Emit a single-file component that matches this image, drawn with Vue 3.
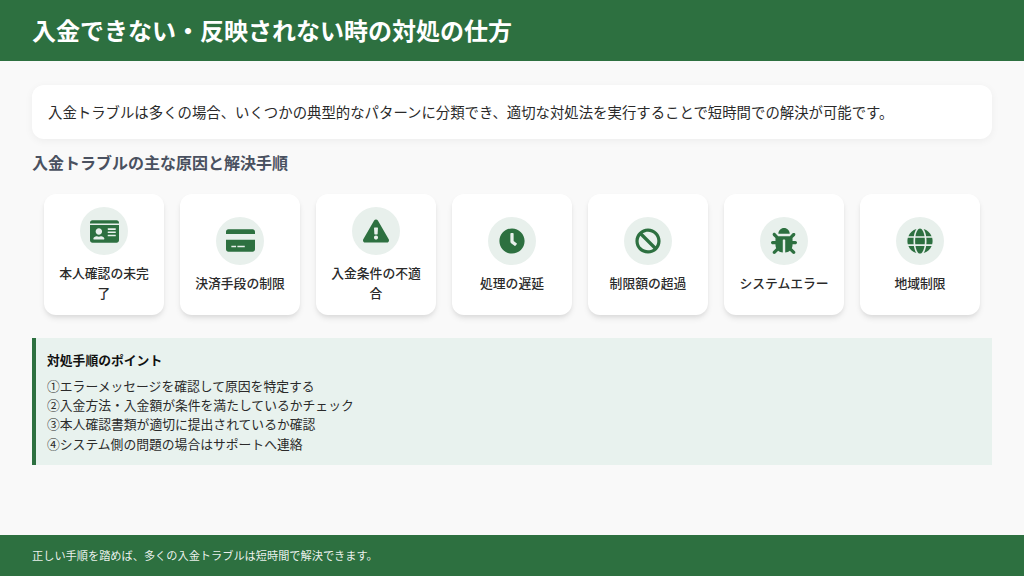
<script setup>
const cards = [
  { label: '本人確認の未完了', vb: '0 0 576 512', w: 29, d: 'M528 32H48C21.5 32 0 53.5 0 80v16h576V80c0-26.5-21.5-48-48-48zM0 128h576v304c0 26.5-21.5 48-48 48H48c-26.5 0-48-21.5-48-48zM176 192c35.3 0 64 28.7 64 64s-28.7 64-64 64-64-28.7-64-64 28.7-64 64-64zM67.1 396.2C75.5 370.5 99.6 352 128 352h8.2c12.3 5.1 25.7 8 39.8 8s27.6-2.9 39.8-8h8.2c28.4 0 52.5 18.5 60.9 44.2 3.2 9.9-5.2 19.8-15.6 19.8H82.7c-10.4 0-18.8-10-15.6-19.8zM352 200c0-4.4 3.6-8 8-8h144c4.4 0 8 3.6 8 8v16c0 4.4-3.6 8-8 8H360c-4.4 0-8-3.6-8-8v-16zm0 64c0-4.4 3.6-8 8-8h144c4.4 0 8 3.6 8 8v16c0 4.4-3.6 8-8 8H360c-4.4 0-8-3.6-8-8v-16zm0 64c0-4.4 3.6-8 8-8h144c4.4 0 8 3.6 8 8v16c0 4.4-3.6 8-8 8H360c-4.4 0-8-3.6-8-8v-16z' },
  { label: '決済手段の制限', vb: '0 0 576 512', w: 29, d: 'M48 32h480c26.5 0 48 21.5 48 48v48H0V80c0-26.5 21.5-48 48-48zM0 240h576v192c0 26.5-21.5 48-48 48H48c-26.5 0-48-21.5-48-48zM106 358h94v30h-94zM226 358h147v30H226z' },
  { label: '入金条件の不適合', vb: '0 0 576 512', w: 26, d: 'M569.517 440.013C587.975 472.007 564.806 512 527.94 512H48.054c-36.937 0-59.999-40.055-41.577-71.987L246.423 23.985c18.467-32.009 64.72-31.951 83.154 0l239.94 416.028zM288 354c-25.405 0-46 20.595-46 46s20.595 46 46 46 46-20.595 46-46-20.595-46-46-46zm-43.673-165.346l7.418 136c.347 6.364 5.609 11.346 11.982 11.346h48.546c6.373 0 11.635-4.982 11.982-11.346l7.418-136c.375-6.874-5.098-12.654-11.982-12.654h-63.383c-6.884 0-12.356 5.78-11.981 12.654z' },
  { label: '処理の遅延', vb: '0 0 512 512', w: 26, d: 'M256,8C119,8,8,119,8,256S119,504,256,504,504,393,504,256,393,8,256,8Zm92.49,313h0l-20,25a16,16,0,0,1-22.49,2.5h0l-67-49.72a40,40,0,0,1-15-31.23V112a16,16,0,0,1,16-16h32a16,16,0,0,1,16,16V256l58,42.5A16,16,0,0,1,348.49,321Z' },
  { label: '制限額の超過', vb: '0 0 512 512', w: 26, d: 'M256 8C119.034 8 8 119.033 8 256s111.034 248 248 248 248-111.034 248-248S392.967 8 256 8zm130.108 117.892c65.448 65.448 70 165.481 20.677 235.637L150.47 105.216c70.204-49.356 170.226-44.735 235.638 20.676zM125.892 386.108c-65.448-65.448-70-165.481-20.677-235.637L361.53 406.784c-70.203 49.356-170.226 44.736-235.638-20.676z' },
  { label: 'システムエラー', vb: '0 0 512 512', w: 26, d: 'M511.988 288.9c-.478 17.43-15.217 31.1-32.653 31.1H424v16c0 21.864-4.882 42.584-13.6 61.145l60.228 60.228c12.496 12.497 12.496 32.758 0 45.255-12.498 12.497-32.759 12.496-45.256 0l-54.736-54.736C345.886 467.965 314.351 480 280 480V236c0-6.627-5.373-12-12-12h-24c-6.627 0-12 5.373-12 12v244c-34.351 0-65.886-12.035-90.636-32.108l-54.736 54.736c-12.498 12.497-32.759 12.496-45.256 0-12.496-12.497-12.496-32.758 0-45.255l60.228-60.228C92.882 378.584 88 357.864 88 336v-16H32.666C15.23 320 .491 306.33.013 288.9-.484 270.816 14.028 256 32 256h56v-58.745l-46.628-46.628c-12.496-12.497-12.496-32.758 0-45.255 12.498-12.497 32.758-12.497 45.256 0L141.255 160h229.489l54.627-54.627c12.498-12.497 32.758-12.497 45.256 0 12.496 12.497 12.496 32.758 0 45.255L424 197.255V256h56c17.972 0 32.484 14.816 31.988 32.9zM257 0c-61.856 0-112 50.144-112 112h224C369 50.144 318.856 0 257 0z' },
  { label: '地域制限', vb: '0 0 496 512', w: 26, d: 'M336.5 160C322 70.7 287.8 8 248 8s-74 62.7-88.5 152h177zM152 256c0 22.2 1.2 43.5 3.3 64h185.3c2.1-20.5 3.3-41.8 3.3-64s-1.2-43.5-3.3-64H155.3c-2.1 20.5-3.3 41.8-3.3 64zm324.7-96c-28.6-67.9-86.5-120.4-158-141.6 24.4 33.8 41.2 84.7 50 141.6h108zM177.2 18.4C105.8 39.6 47.8 92.1 19.3 160h108c8.7-56.9 25.5-107.8 49.9-141.6zM487.4 192H372.7c2.1 21 3.3 42.5 3.3 64s-1.2 43-3.3 64h114.6c5.5-20.5 8.6-41.8 8.6-64s-3.1-43.5-8.5-64zM120 256c0-21.5 1.2-43 3.3-64H8.6C3.2 212.5 0 233.8 0 256s3.2 43.5 8.6 64h114.6c-2-21-3.2-42.5-3.2-64zm39.5 96c14.5 89.3 48.7 152 88.5 152s74-62.7 88.5-152h-177zm159.3 141.6c71.4-21.2 129.4-73.7 158-141.6h-108c-8.8 56.9-25.6 107.8-50 141.6zM19.3 352c28.6 67.9 86.5 120.4 158 141.6-24.4-33.8-41.2-84.7-50-141.6h-108z' },
]
const steps = [
  '①エラーメッセージを確認して原因を特定する',
  '②入金方法・入金額が条件を満たしているかチェック',
  '③本人確認書類が適切に提出されているか確認',
  '④システム側の問題の場合はサポートへ連絡',
]
</script>

<template>
  <div class="page">
    <header class="top"><h1>入金できない・反映されない時の対処の仕方</h1></header>
    <main class="body">
      <p class="intro">入金トラブルは多くの場合、いくつかの典型的なパターンに分類でき、適切な対処法を実行することで短時間での解決が可能です。</p>
      <h2>入金トラブルの主な原因と解決手順</h2>
      <div class="cards">
        <div v-for="c in cards" :key="c.label" class="card">
          <div class="circle">
            <svg :viewBox="c.vb" :width="c.w" :height="c.w" fill="#2d7040" fill-rule="evenodd"><path :d="c.d" /></svg>
          </div>
          <div class="label">{{ c.label }}</div>
        </div>
      </div>
      <section class="note">
        <h3>対処手順のポイント</h3>
        <p v-for="s in steps" :key="s">{{ s }}</p>
      </section>
    </main>
    <footer class="bottom">正しい手順を踏めば、多くの入金トラブルは短時間で解決できます。</footer>
  </div>
</template>

<style scoped>
.page {
  width: 1024px;
  height: 576px;
  display: flex;
  flex-direction: column;
  background: #f9f9f9;
  font-family: "Noto Sans CJK JP", "Noto Sans", sans-serif;
  color: #2a2a2a;
  overflow: hidden;
}
.top {
  height: 61px;
  box-sizing: border-box;
  background: #2d7040;
  display: flex;
  align-items: center;
  padding: 0 32px 2px;
  flex: none;
}
h1 {
  margin: 0;
  font-size: 24px;
  font-weight: 700;
  color: #fff;
  line-height: 1.3;
}
.body {
  flex: 1;
  padding: 24px 32px 0;
}
.intro {
  margin: 0;
  height: 54px;
  box-sizing: border-box;
  display: flex;
  align-items: center;
  padding: 0 16px 2px;
  background: #fff;
  border-radius: 12px;
  box-shadow: 0 2px 8px rgba(0, 0, 0, 0.05);
  font-size: 14.4px;
}
h2 {
  margin: 12px 0 0;
  font-size: 16px;
  line-height: 22px;
  font-weight: 700;
  color: #4a5160;
}
.cards {
  display: flex;
  gap: 16px;
  padding: 0 12px;
  margin-top: 21px;
}
.card {
  width: 120px;
  height: 121px;
  background: #fff;
  border-radius: 12px;
  box-shadow: 0 4px 6px -1px rgba(0, 0, 0, 0.1), 0 2px 4px -1px rgba(0, 0, 0, 0.05);
  display: flex;
  flex-direction: column;
  align-items: center;
  justify-content: center;
  padding: 0 12px;
  box-sizing: border-box;
}
.circle {
  width: 48px;
  height: 48px;
  border-radius: 50%;
  background: #e8f0ec;
  display: flex;
  align-items: center;
  justify-content: center;
  margin-bottom: 8px;
  flex: none;
}
.label {
  font-size: 12.8px;
  line-height: 19.2px;
  font-weight: 500;
  text-align: center;
}
.note {
  margin-top: 23px;
  height: 127px;
  box-sizing: border-box;
  border-left: 4px solid #2d7040;
  background: #e8f2ee;
  padding: 12px 11px;
}
h3 {
  margin: 0 0 6px;
  font-size: 12.8px;
  line-height: 20px;
  font-weight: 700;
  color: #111;
}
.note p {
  margin: 0;
  font-size: 12.8px;
  line-height: 19.2px;
}
.bottom {
  height: 41px;
  box-sizing: border-box;
  flex: none;
  background: #2d7040;
  color: rgba(255, 255, 255, 0.92);
  font-size: 11.2px;
  display: flex;
  align-items: center;
  padding: 0 32px 2px;
}
</style>
